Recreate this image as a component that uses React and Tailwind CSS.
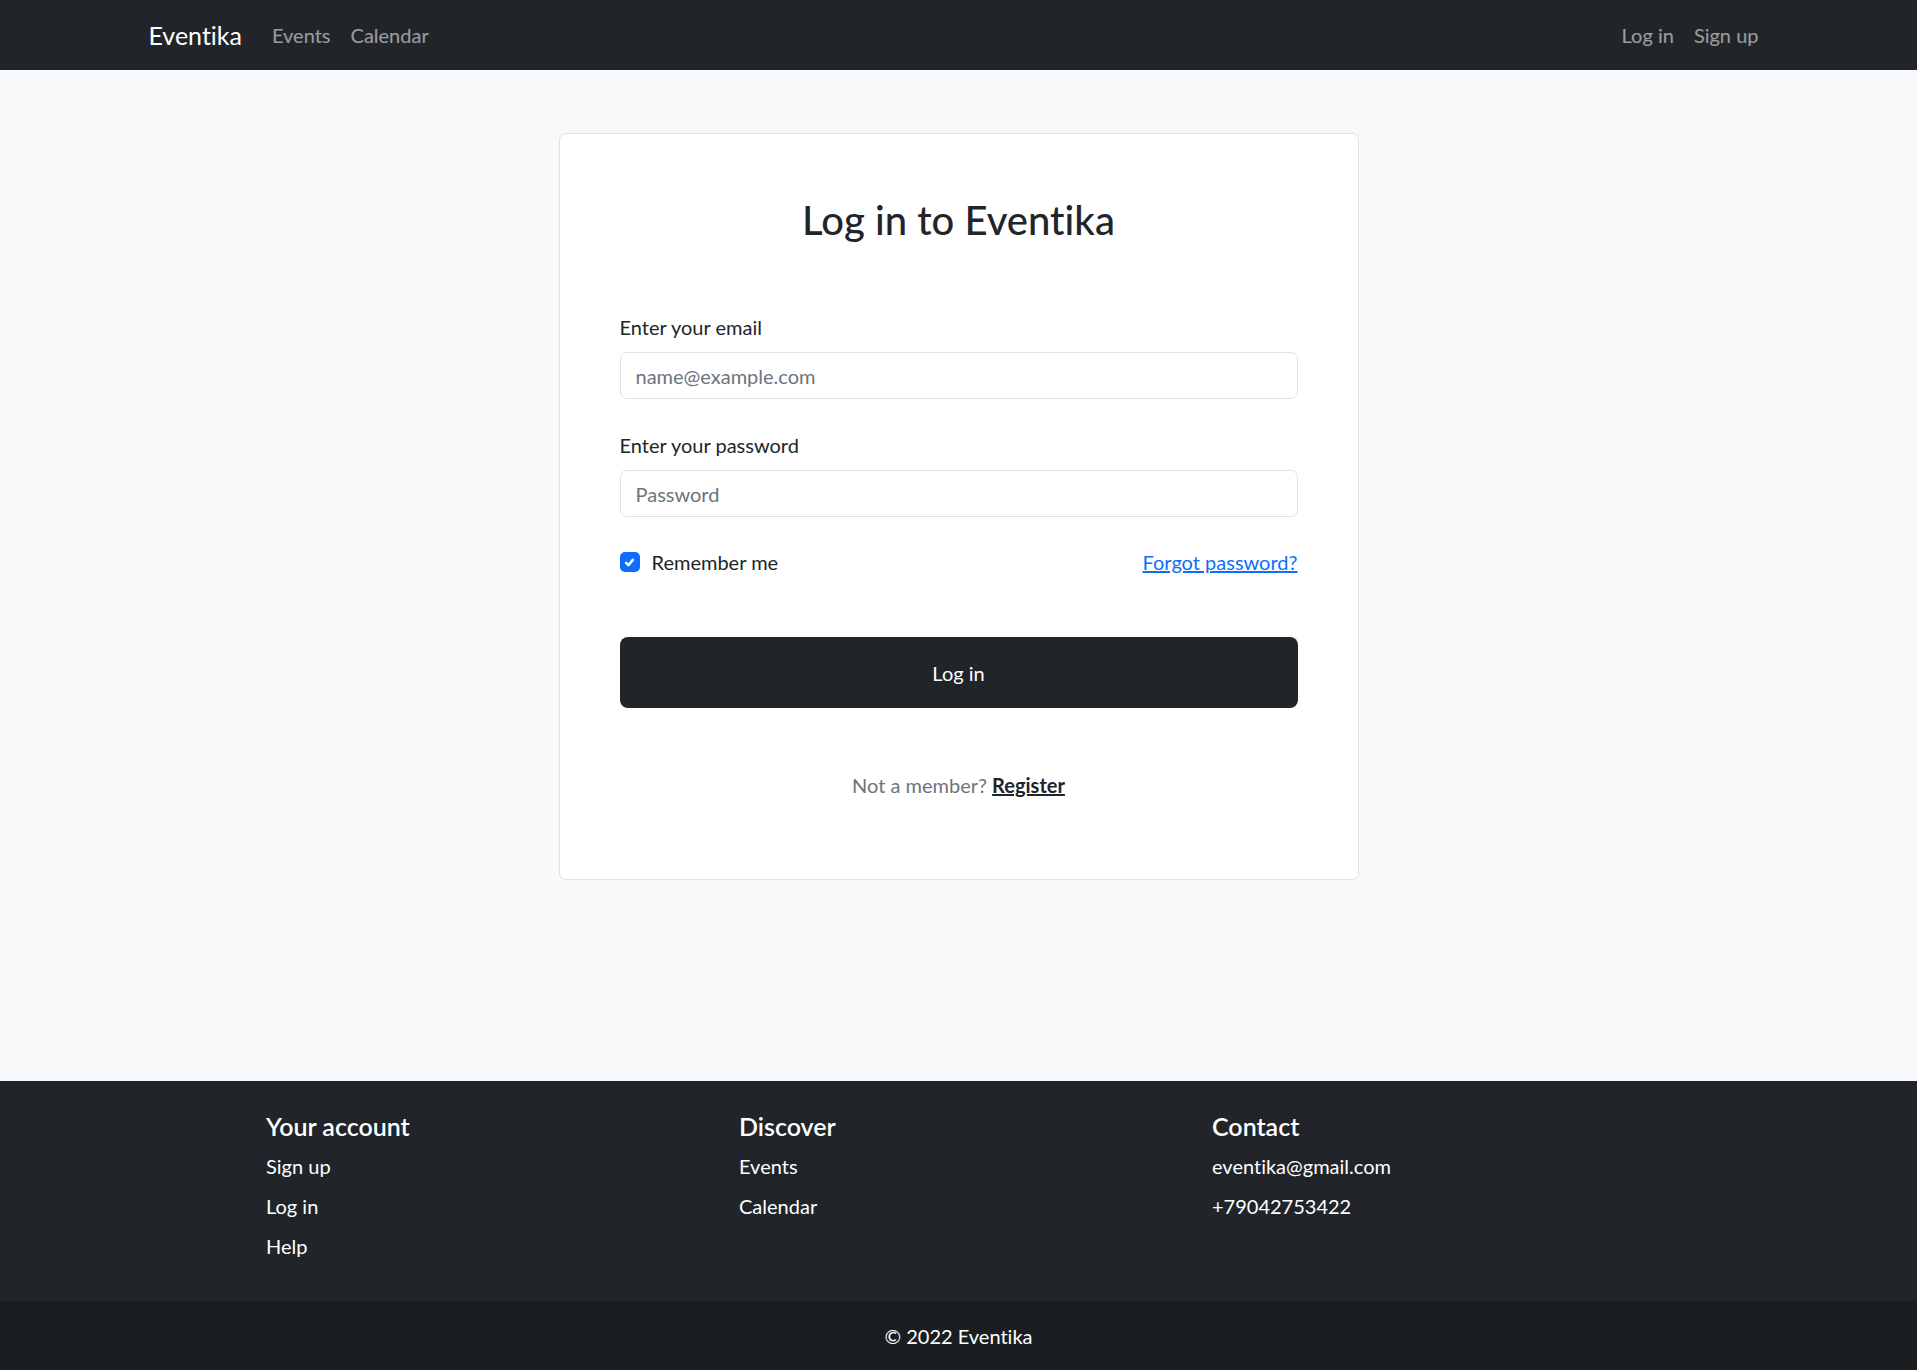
const NavLink = ({ children }) => (
  <a href="#" className="px-[10px] py-[10px] text-[20px] leading-[30px] text-white/55 hover:text-white/75">
    {children}
  </a>
);

const FooterCol = ({ title, items }) => (
  <div className="w-[473px]">
    <h5 className="text-[25px] leading-[30px] font-semibold text-white mb-[10px]">{title}</h5>
    <ul>
      {items.map((item, i) => (
        <li key={i} className="text-[20px] leading-[30px] text-white mb-[10px]">{item}</li>
      ))}
    </ul>
  </div>
);

export default function App() {
  return (
    <div className="min-h-[1370px] flex flex-col bg-[#f8f9fa] text-[#212529] font-[Lato,sans-serif] [font-variant-ligatures:none]">
      <nav className="h-[70px] bg-[#212529] flex items-center">
        <div className="w-[1650px] mx-auto px-[15px] flex items-center justify-between">
          <div className="flex items-center">
            <a href="#" className="text-[25px] leading-[30px] text-white mr-[20px]">Eventika</a>
            <NavLink>Events</NavLink>
            <NavLink>Calendar</NavLink>
          </div>
          <div className="flex items-center">
            <NavLink>Log in</NavLink>
            <NavLink>Sign up</NavLink>
          </div>
        </div>
      </nav>

      <main className="flex-1 pt-[63px] pb-[201px]">
        <div className="w-[800px] mx-auto bg-white border border-[#dee2e6] rounded-[7px] px-[60px] pt-[62px] pb-[79px]">
          <h2 className="text-[40px] leading-[48px] font-medium text-center">Log in to Eventika</h2>

          <form className="mt-[68px]" onSubmit={e => e.preventDefault()}>
            <label className="block text-[20px] leading-[30px] mb-[10px]">Enter your email</label>
            <input
              type="email"
              placeholder="name@example.com"
              className="block w-full h-[47px] px-[15px] text-[20px] bg-white border border-[#dee2e6] rounded-[7px] placeholder:text-[#6c757d] outline-none"
            />

            <label className="block text-[20px] leading-[30px] mt-[31px] mb-[10px]">Enter your password</label>
            <input
              type="password"
              placeholder="Password"
              className="block w-full h-[47px] px-[15px] text-[20px] bg-white border border-[#dee2e6] rounded-[7px] placeholder:text-[#6c757d] outline-none"
            />

            <div className="mt-[30px] flex items-center justify-between h-[30px]">
              <label className="flex items-center gap-[12px] text-[20px] leading-[30px]">
                <span className="w-[20px] h-[20px] rounded-[5px] bg-[#0d6efd] flex items-center justify-center">
                  <svg viewBox="0 0 20 20" className="w-[15px] h-[15px]" fill="none" stroke="white" strokeWidth="3.5" strokeLinecap="round" strokeLinejoin="round">
                    <path d="M5.5 10.5l3 3l6-7" />
                  </svg>
                </span>
                Remember me
              </label>
              <a href="#" className="text-[20px] leading-[30px] text-[#0d6efd] underline">Forgot password?</a>
            </div>

            <button className="mt-[60px] w-full h-[71px] rounded-[8px] bg-[#212529] text-white text-[20px]">Log in</button>
          </form>

          <p className="mt-[62px] text-center text-[20px] leading-[30px] text-[#6c757d]">
            Not a member? <a href="#" className="font-bold text-[#212529] underline">Register</a>
          </p>
        </div>
      </main>

      <footer className="bg-[#212529] text-white">
        <div className="h-[220px] pt-[30px] pl-[266px] flex">
          <FooterCol title="Your account" items={['Sign up', 'Log in', 'Help']} />
          <FooterCol title="Discover" items={['Events', 'Calendar']} />
          <FooterCol title="Contact" items={['eventika@gmail.com', '+79042753422']} />
        </div>
        <div className="h-[69px] bg-[#1b1e21] flex items-center justify-center text-[20px] leading-[30px]">
          © 2022 Eventika
        </div>
      </footer>
    </div>
  );
}
